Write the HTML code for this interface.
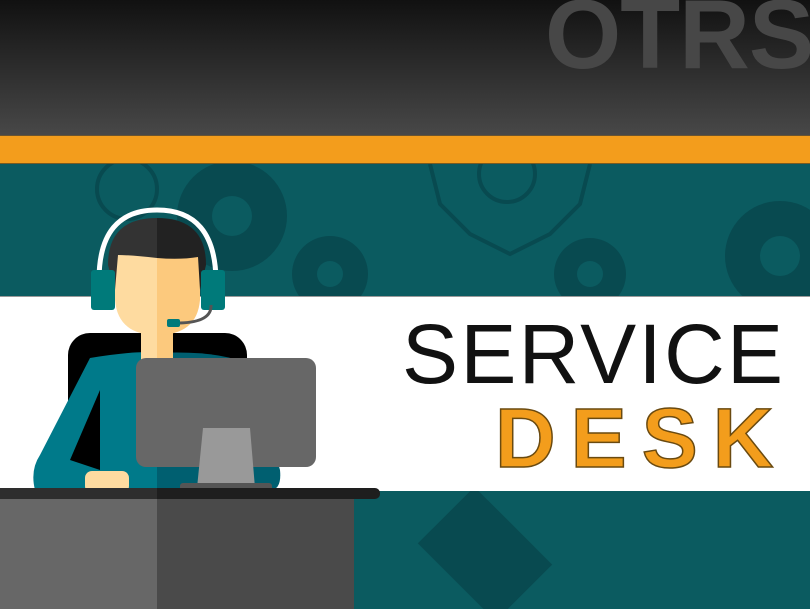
<!DOCTYPE html><html><head><style>
html,body{margin:0;width:810px;height:609px;overflow:hidden}
body{position:relative;font-family:"Liberation Sans",sans-serif}
div{position:absolute}
</style></head><body>
<div style="left:0;top:0;width:810px;height:136px;background:linear-gradient(#111,#484848)"></div>
<div style="left:545px;top:-22px;font-weight:bold;font-size:98px;color:#474747;letter-spacing:-1px;white-space:nowrap">OTRS</div>
<div style="left:0;top:135px;width:810px;height:29px;background:#f39d1c;border-top:1px solid #6a5430;border-bottom:1px solid #7a5a20;box-sizing:border-box"></div>
<div style="left:0;top:164px;width:810px;height:445px;background:#0b5b60"></div>
<svg style="position:absolute;left:0;top:164px" width="810" height="445">
<g fill="#084a50">
<circle cx="232" cy="52" r="55"/><circle cx="330" cy="110" r="38"/><circle cx="590" cy="110" r="36"/><circle cx="780" cy="92" r="55"/>
<rect x="430" y="350" width="110" height="80" transform="rotate(45 485 390)"/>
</g>
<g fill="#0b5b60"><circle cx="232" cy="52" r="20"/><circle cx="330" cy="110" r="13"/><circle cx="590" cy="110" r="13"/><circle cx="780" cy="92" r="20"/></g>
<g fill="none" stroke="#084a50" stroke-width="4"><circle cx="127" cy="25" r="30"/><path d="M430 0 L440 40 L470 70 L510 90 L550 70 L580 40 L590 0"/><circle cx="507" cy="10" r="28"/></g>
</svg>
<div style="left:0;top:296px;width:810px;height:195px;background:#fff;border-top:1px solid #999;box-sizing:border-box"></div>
<div style="left:402px;top:312px;font-size:84px;color:#111;letter-spacing:2.3px;white-space:nowrap;line-height:1">SERVICE</div>
<div style="left:495px;top:396px;font-size:84px;font-weight:bold;color:#f39d1c;letter-spacing:15px;-webkit-text-stroke:1.5px #6a4a10;white-space:nowrap;line-height:1">DESK</div>
<svg style="position:absolute;left:0;top:0" width="400" height="609">
<rect x="68" y="333" width="179" height="150" rx="22" fill="#000"/>
<path d="M90 358 Q140 350 157 353 L157 490 L35 490 Q30 470 40 455 Z" fill="#007a8a"/>
<path d="M157 353 Q220 350 250 365 L280 470 Q282 490 270 490 L157 490 Z" fill="#005f70"/>
<path d="M100 390 L70 460 L100 470 Z" fill="#000"/>
<rect x="141" y="320" width="32" height="40" fill="#fedba0"/><rect x="157" y="320" width="16" height="40" fill="#fcc97d"/>
<path d="M115 255 L157 255 L157 335 Q118 335 115 300 Z" fill="#fedba0"/>
<path d="M157 255 L200 255 L200 300 Q197 335 157 335 Z" fill="#fcc97d"/>
<path d="M108 265 Q108 218 157 218 L157 258 Q130 255 118 255 L115 290 Z" fill="#333"/>
<path d="M157 218 Q206 218 206 265 L200 290 L198 257 Q180 260 157 258 Z" fill="#222"/>
<path d="M99 280 Q99 210 157 210 Q215 210 216 280" fill="none" stroke="#fff" stroke-width="5"/>
<rect x="91" y="270" width="24" height="40" rx="3" fill="#007a7a"/><rect x="201" y="270" width="24" height="40" rx="3" fill="#007a7a"/>
<path d="M211 305 Q212 322 180 323" fill="none" stroke="#555" stroke-width="3"/>
<rect x="167" y="319" width="13" height="8" rx="2" fill="#007a7a"/>
<rect x="85" y="471" width="44" height="22" rx="7" fill="#fedba0"/>
<rect x="136" y="358" width="180" height="109" rx="10" fill="#676767"/>
<path d="M203 428 L250 428 L255 488 L197 488 Z" fill="#999"/>
<rect x="180" y="483" width="92" height="8" rx="3" fill="#555"/>
<rect x="0" y="499" width="157" height="110" fill="#676767"/><rect x="157" y="499" width="197" height="110" fill="#4a4a4a"/>
<rect x="-10" y="488" width="390" height="11" rx="5" fill="#1e1e1e"/><rect x="0" y="488" width="157" height="11" fill="#2e2e2e"/>
</svg>
</body></html>
